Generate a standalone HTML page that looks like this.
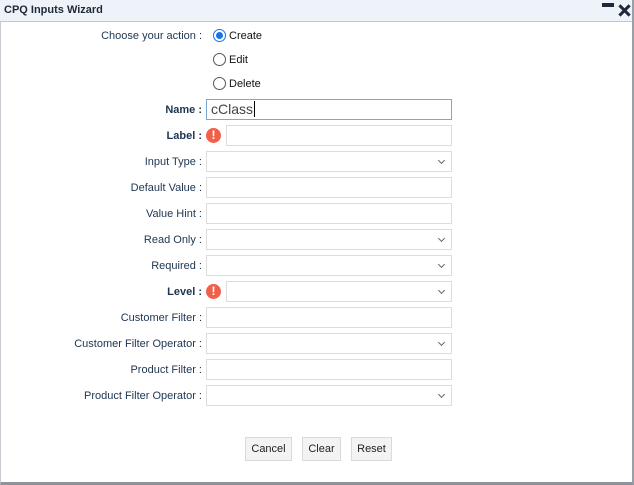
<!DOCTYPE html>
<html><head><meta charset="utf-8"><style>
*{box-sizing:border-box;margin:0;padding:0}
body{width:634px;height:485px;background:#fff;font-family:"Liberation Sans",Arial,sans-serif;font-size:11px;color:#1d3550;position:relative;overflow:hidden}
.win{position:absolute;left:0;top:0;width:634px;height:485px;border-left:1px solid #c8ccd2;border-right:2px solid #9aa0a8;border-bottom:3px solid #8e949b}
.title{position:absolute;left:0;top:0;width:632px;height:21px;background:#eef3fa;border-bottom:1px solid #c3c8cf;font-weight:bold;font-size:11px;color:#1e2a38;padding:3px 0 0 4px}
.lbl{position:absolute;right:432px;text-align:right;white-space:nowrap;line-height:22px}
.b{font-weight:bold}
.inp{position:absolute;left:206px;width:246px;height:21px;border:1px solid #dcdcdc;background:#fff}
.sel:after{content:"";position:absolute;right:7px;top:6px;width:4px;height:4px;border-right:1.6px solid #666;border-bottom:1.6px solid #666;transform:rotate(45deg)}
.ex{position:absolute;left:206px;width:15px;height:15px;border-radius:50%;background:#f0614c;color:#fff;font-weight:bold;font-size:12px;text-align:center;line-height:15px}
.rad{position:absolute;left:213px;width:13px;height:13px;border:1px solid #555;border-radius:50%;background:#fff}
.rad.on{border-color:#1a73e8}
.rad.on:after{content:"";position:absolute;left:2px;top:2px;width:7px;height:7px;border-radius:50%;background:#1a73e8}
.rt{position:absolute;left:229px;color:#111}
.btn{position:absolute;top:437px;height:24px;background:#f3f3f3;border:1px solid #dadada;color:#222;font-size:11px;line-height:22px;text-align:center}
</style></head><body>
<div class="win"></div>
<div class="title" style="padding-top:4px;height:22px">CPQ Inputs Wizard</div>
<div style="position:absolute;left:602px;top:3px;width:12px;height:4px;background:#1e2a3a"></div>
<div style="position:absolute;left:617px;top:1px;font-weight:bold;font-size:18px;color:#1e2a3a;line-height:20px;-webkit-text-stroke:0.6px #1e2a3a">✕</div>

<div class="lbl" style="top:25px">Choose your action :</div>
<div class="rad on" style="top:29px"></div><div class="rt" style="top:30px">Create</div>
<div class="rad" style="top:53px"></div><div class="rt" style="top:54px">Edit</div>
<div class="rad" style="top:77px"></div><div class="rt" style="top:78px">Delete</div>

<div class="lbl b" style="top:99px">Name :</div>
<div class="inp" style="top:99px;border-color:#7aa7d6;font-size:14px;color:#444;padding:1px 0 0 4px">cClass<span style="border-left:1px solid #000;margin-left:1px"></span></div>

<div class="lbl b" style="top:125px">Label :</div>
<div class="ex" style="top:128px">!</div>
<div class="inp" style="top:125px;left:226px;width:226px"></div>

<div class="lbl" style="top:151px">Input Type :</div><div class="inp sel" style="top:151px"></div>
<div class="lbl" style="top:177px">Default Value :</div><div class="inp" style="top:177px"></div>
<div class="lbl" style="top:203px">Value Hint :</div><div class="inp" style="top:203px"></div>
<div class="lbl" style="top:229px">Read Only :</div><div class="inp sel" style="top:229px"></div>
<div class="lbl" style="top:255px">Required :</div><div class="inp sel" style="top:255px"></div>
<div class="lbl b" style="top:281px">Level :</div>
<div class="ex" style="top:284px">!</div>
<div class="inp sel" style="top:281px;left:226px;width:226px"></div>
<div class="lbl" style="top:307px">Customer Filter :</div><div class="inp" style="top:307px"></div>
<div class="lbl" style="top:333px">Customer Filter Operator :</div><div class="inp sel" style="top:333px"></div>
<div class="lbl" style="top:359px">Product Filter :</div><div class="inp" style="top:359px"></div>
<div class="lbl" style="top:385px">Product Filter Operator :</div><div class="inp sel" style="top:385px"></div>

<div class="btn" style="left:245px;width:47px">Cancel</div>
<div class="btn" style="left:302px;width:39px">Clear</div>
<div class="btn" style="left:351px;width:41px">Reset</div>
</body></html>
